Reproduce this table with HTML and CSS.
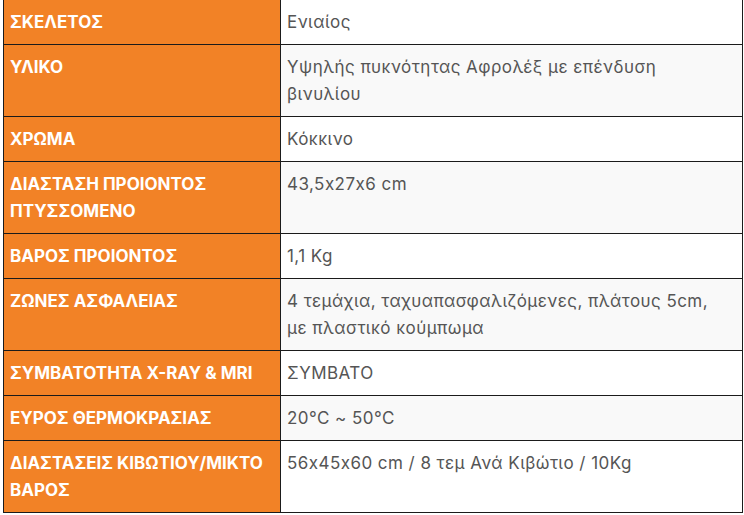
FILE: index.html
```html
<!DOCTYPE html>
<html lang="el">
<head>
<meta charset="utf-8">
<link rel="stylesheet" href="styles.css">
</head>
<body>
<table class="specs">
  <colgroup><col class="c-label"><col class="c-value"></colgroup>
  <tbody>
    <tr><th>ΣΚΕΛΕΤΟΣ</th><td>Ενιαίος</td></tr>
    <tr><th>ΥΛΙΚΟ</th><td>Υψηλής πυκνότητας Αφρολέξ με επένδυση βινυλίου</td></tr>
    <tr><th>ΧΡΩΜΑ</th><td>Κόκκινο</td></tr>
    <tr><th>ΔΙΑΣΤΑΣΗ ΠΡΟΙΟΝΤΟΣ ΠΤΥΣΣΟΜΕΝΟ</th><td>43,5x27x6 cm</td></tr>
    <tr><th>ΒΑΡΟΣ ΠΡΟΙΟΝΤΟΣ</th><td>1,1 Kg</td></tr>
    <tr><th>ΖΩΝΕΣ ΑΣΦΑΛΕΙΑΣ</th><td>4 τεμάχια, ταχυαπασφαλιζόμενες, πλάτους 5cm, με πλαστικό κούμπωμα</td></tr>
    <tr><th>ΣΥΜΒΑΤΟΤΗΤΑ X-RAY &amp; MRI</th><td>ΣΥΜΒΑΤΟ</td></tr>
    <tr><th>ΕΥΡΟΣ ΘΕΡΜΟΚΡΑΣΙΑΣ</th><td>20°C ~ 50°C</td></tr>
    <tr><th>ΔΙΑΣΤΑΣΕΙΣ ΚΙΒΩΤΙΟΥ/ΜΙΚΤΟ ΒΑΡΟΣ</th><td>56x45x60 cm / 8 τεμ Ανά Κιβώτιο / 10Kg</td></tr>
  </tbody>
</table>
</body>
</html>
```
FILE: styles.css
```css
html, body {
  margin: 0;
  padding: 0;
  background: #ffffff;
}
body {
  padding-left: 3px;
}
.specs {
  width: 740px;
  table-layout: fixed;
  border-collapse: collapse;
  font-family: Inter, "Open Sans", sans-serif;
  line-height: 27px;
}
.c-label { width: 277px; }
.specs th, .specs td {
  border: 1px solid #1b1b1b;
  padding: 8.5px 20px 8.5px 6px;
  vertical-align: top;
  text-align: left;
}
.specs tr:first-child > th,
.specs tr:first-child > td {
  border-top: 0;
}
.specs th {
  background: #f28226;
  color: #ffffff;
  font-weight: 700;
  font-size: 17px;
  padding-right: 4px;
}
.specs td {
  color: #555555;
  font-weight: 400;
  font-size: 17px;
  letter-spacing: 0.45px;
}
.specs tr:nth-child(even) td {
  background: #f9f9f9;
}
```
